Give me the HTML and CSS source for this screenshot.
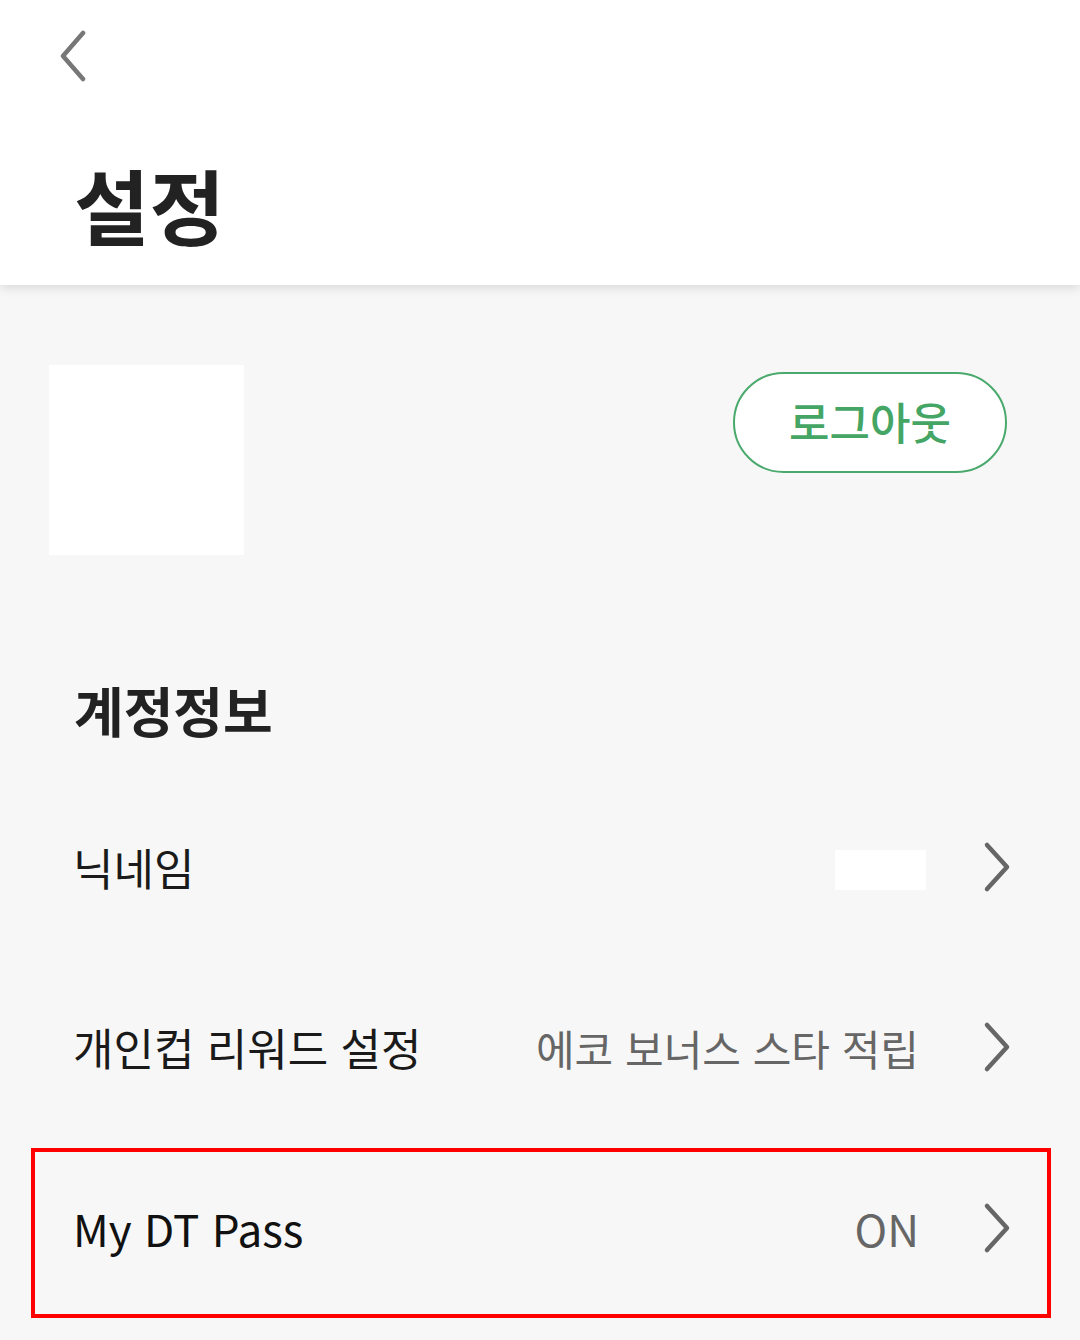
FILE: index.html
```html
<!DOCTYPE html>
<html lang="ko">
<head>
<meta charset="utf-8">
<link rel="stylesheet" href="styles.css">
</head>
<body>
<header class="header">
  <div class="back">
    <svg width="30" height="52" viewBox="0 0 30 52"><path d="M25 3 L5 26 L25 49" fill="none" stroke="#777" stroke-width="4.5" stroke-linecap="round" stroke-linejoin="round"/></svg>
  </div>
  <h1 class="title">설정</h1>
</header>
<main class="content">
  <section class="profile">
    <div class="avatar"></div>
    <button class="logout">로그아웃</button>
  </section>
  <h2 class="section-title">계정정보</h2>
  <div class="row">
    <span class="label">닉네임</span>
    <span class="value"><span class="blank"></span></span>
    <svg class="chev" width="28" height="52" viewBox="0 0 28 52"><path d="M4 4 L24 26 L4 48" fill="none" stroke="#666" stroke-width="4.5" stroke-linecap="round" stroke-linejoin="round"/></svg>
  </div>
  <div class="row">
    <span class="label">개인컵 리워드 설정</span>
    <span class="value">에코 보너스 스타 적립</span>
    <svg class="chev" width="28" height="52" viewBox="0 0 28 52"><path d="M4 4 L24 26 L4 48" fill="none" stroke="#666" stroke-width="4.5" stroke-linecap="round" stroke-linejoin="round"/></svg>
  </div>
  <div class="row highlight">
    <span class="label latin">My DT Pass</span>
    <span class="value latin">ON</span>
    <svg class="chev" width="28" height="52" viewBox="0 0 28 52"><path d="M4 4 L24 26 L4 48" fill="none" stroke="#666" stroke-width="4.5" stroke-linecap="round" stroke-linejoin="round"/></svg>
  </div>
</main>
</body>
</html>
```

FILE: styles.css
```css
* { box-sizing: border-box; }
html, body { margin: 0; padding: 0; }
body {
  width: 1080px;
  height: 1340px;
  overflow: hidden;
  background: #f7f7f7;
  font-family: "Noto Sans CJK KR", "Noto Sans", sans-serif;
  color: #222;
}
.header {
  background: #fff;
  height: 285px;
  padding: 30px 0 0 58px;
  box-shadow: 0 3px 10px rgba(0,0,0,0.12);
  position: relative;
  z-index: 1;
}
.back { height: 54px; }
.title {
  margin: 70px 0 0 16px;
  font-size: 82px;
  font-weight: 700;
  line-height: 100px;
  color: #222;
}
.content { padding-top: 80px; }
.profile {
  display: flex;
  justify-content: space-between;
  align-items: flex-start;
  padding: 0 73px 0 49px;
}
.avatar {
  width: 195px;
  height: 190px;
  background: #fff;
}
.logout {
  margin-top: 7px;
  width: 274px;
  height: 101px;
  border: 2px solid #4aa96c;
  border-radius: 51px;
  background: #fff;
  color: #45a565;
  font-family: "Noto Sans CJK KR", "Noto Sans", sans-serif;
  font-size: 44px;
  font-weight: 500;
  padding: 0 0 4px 0;
}
.section-title {
  margin: 120px 0 0 74px;
  font-size: 54px;
  font-weight: 700;
  line-height: 70px;
  color: #222;
}
.row {
  display: flex;
  align-items: center;
  height: 180px;
  padding: 0 72px 0 73px;
  font-size: 44px;
}
.row:first-of-type { margin-top: 32px; }
.label { flex: 1; color: #1a1a1a; }
.value { color: #666; font-size: 42px; margin-right: 64px; display: flex; align-items: center; }
.blank { display: inline-block; width: 91px; height: 40px; background: #fff; margin-right: -7px; margin-top: 6px; }
.chev { display: block; margin-right: -3px; }
.highlight {
  margin: 11px 29px 0 31px;
  height: 170px;
  border: 4px solid #f00;
  padding: 0 39px 10px 38px;
}
.latin { font-size: 44px; }
.label.latin { color: #111; }
```
